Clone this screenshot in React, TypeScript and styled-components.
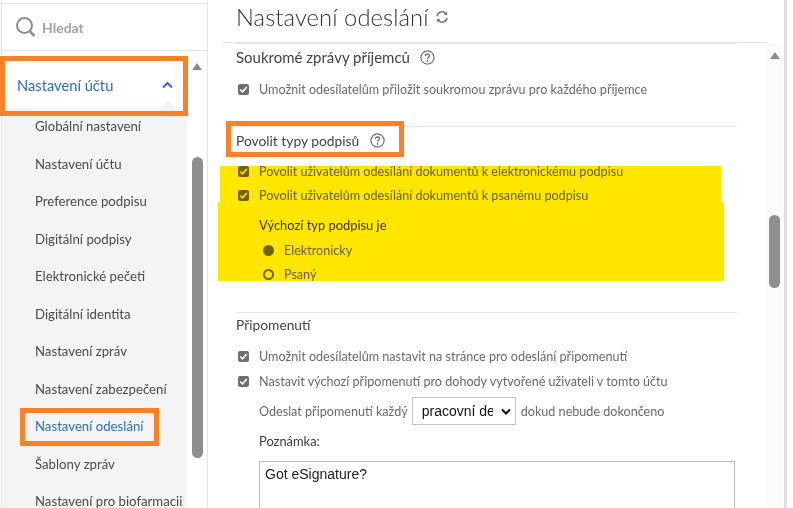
import React from "react";
import styled, { createGlobalStyle } from "styled-components";

const Global = createGlobalStyle`
  html, body { margin: 0; padding: 0; background: #fff; overflow: hidden; }
  body { font-family: Lato, "Open Sans", "Liberation Sans", sans-serif; color: #4b4b4b; }
  #root { width: 793px; height: 508px; }
`;

const Page = styled.div`
  position: relative; width: 793px; height: 508px; overflow: hidden; display: flex; background: #fff;
`;
const Sidebar = styled.aside`
  width: 207px; height: 508px; margin-left: 1px; box-sizing: border-box; flex: none;
  display: flex; flex-direction: column; border-right: 1px solid #e6e6e6; border-left: 1px solid #e6e6e6;
`;
const Search = styled.div`
  height: 48px; margin-top: 3px; flex: none; box-sizing: border-box; display: flex; align-items: center; gap: 6px;
  padding-left: 13px; border-top: 1px solid #e6e6e6; border-bottom: 1px solid #e6e6e6;
  font-size: 14px; font-weight: 700; color: #a3a3a3;
`;
const SideBody = styled.div`
  flex: 1; display: flex; min-height: 0;
`;
const Nav = styled.nav`
  width: 185px; flex: none; display: flex; flex-direction: column;
`;
const NavHead = styled.div`
  position: relative; height: 57px; flex: none; background: #fff; box-sizing: border-box; display: flex; align-items: center;
  justify-content: space-between; padding: 11px 14px 0 15px; font-size: 14.7px; color: #2c6fc0;
  &::after {
    content: ""; position: absolute; right: 11px; bottom: 0; width: 0; height: 0;
    border-left: 8px solid transparent; border-right: 8px solid transparent; border-bottom: 8px solid #f4f4f4;
  }
`;
const NavList = styled.ul`
  list-style: none; margin: 0; padding: 0; flex: 1; background: #f4f4f4; overflow: hidden;
`;
const NavItem = styled.li<{ $active?: boolean }>`
  height: 37.5px; line-height: 37.5px; padding-left: 33px; font-size: 13.2px; white-space: nowrap;
  color: ${(p) => (p.$active ? "#2c6fc0" : "#4b4b4b")};
`;
const Track = styled.div<{ $top: number; $thumbGap: number; $thumb: number; $w: number; $bg?: string }>`
  width: ${(p) => p.$w}px; flex: none; display: flex; flex-direction: column; align-items: center;
  padding-top: ${(p) => p.$top}px; gap: ${(p) => p.$thumbGap}px; background: ${(p) => p.$bg ?? "transparent"};
  &::after { content: ""; width: 11px; height: ${(p) => p.$thumb}px; border-radius: 6px; background: #8e8e8e; }
`;
const Arrow = styled.div`
  width: 0; height: 0; border-left: 5.5px solid transparent; border-right: 5.5px solid transparent;
  border-bottom: 7px solid #8a8a8a;
`;
const Main = styled.main`
  width: 579px; height: 508px; flex: none; display: flex; flex-direction: column; box-sizing: border-box;
  border-right: 3px solid #e0e0e0;
`;
const TitleBar = styled.header`
  height: 43px; flex: none; box-sizing: border-box; margin: 0 17px 0 14px; padding-left: 14px; padding-bottom: 8px;
  display: flex; align-items: center; gap: 6px; border-bottom: 1px solid #e6e6e6;
`;
const Title = styled.h1`
  margin: 0; font-size: 23.7px; font-weight: 300; color: #333; letter-spacing: 0.1px;
`;
const MainBody = styled.div`
  flex: 1; display: flex; min-height: 0;
`;
const Content = styled.div`
  width: 558px; flex: none; box-sizing: border-box; padding-left: 28px; overflow: hidden;
  display: flex; flex-direction: column;
`;
const Section = styled.section<{ $h: number; $line?: boolean }>`
  height: ${(p) => p.$h}px; flex: none; box-sizing: border-box; margin-right: 29px;
  border-top: ${(p) => (p.$line ? "1px solid #e6e6e6" : "1px solid transparent")};
`;
const Heading = styled.h2<{ $size?: number; $h?: number; $gap?: number }>`
  margin: 0; height: ${(p) => p.$h ?? 26}px; display: flex; align-items: center; gap: ${(p) => p.$gap ?? 10}px;
  font-size: ${(p) => p.$size ?? 13.8}px; font-weight: 400; color: #444;
`;
const Row = styled.label<{ $h?: number }>`
  height: ${(p) => p.$h ?? 24}px; display: flex; align-items: center; font-size: 12.6px; color: #6a6a6a; white-space: nowrap;
`;
const Check = styled.span`
  width: 11px; height: 11px; border-radius: 2px; background: #6f6f6f; margin: 0 10px 0 2px; flex: none;
  display: flex; align-items: center; justify-content: center;
`;
const Indented = styled.div`
  padding-left: 23px; display: flex; flex-direction: column;
`;
const SubLabel = styled.div<{ $h: number; $pad?: number }>`
  height: ${(p) => p.$h}px; box-sizing: border-box; padding-top: ${(p) => p.$pad ?? 0}px; display: flex; align-items: center;
  font-size: 12.9px; color: #3c3c3c; white-space: nowrap;
`;
const RadioRow = styled.div`
  height: 24px; display: flex; align-items: center; gap: 10px; padding-left: 4px; font-size: 12.6px; color: #6a6a6a;
`;
const Radio = styled.span<{ $on?: boolean }>`
  width: 11px; height: 11px; box-sizing: border-box; border-radius: 50%; flex: none;
  border: 2px solid #6f6f6f; background: ${(p) => (p.$on ? "#6f6f6f" : "transparent")};
`;
const SelectBox = styled.span`
  width: 104px; height: 28px; box-sizing: border-box; margin: 0 5px 0 4px; border: 1px solid #c4c4c4; flex: none;
  display: flex; align-items: center; justify-content: space-between; padding: 0 4px 0 9px; overflow: hidden;
  font-family: "Liberation Sans", Arial, sans-serif; font-size: 14px; color: #111;
`;
const SelectText = styled.span`
  width: 71px; overflow: hidden; white-space: nowrap;
`;
const TextBox = styled.div`
  width: 476px; height: 70px; box-sizing: border-box; margin-top: 7px; border: 1px solid #bbb; padding: 4px 5px;
  font-family: "Liberation Sans", Arial, sans-serif; font-size: 14px; color: #222; flex: none;
`;
const Frame = styled.div<{ $x: number; $y: number; $w: number; $h: number; $b?: number }>`
  position: absolute; left: ${(p) => p.$x}px; top: ${(p) => p.$y}px; width: ${(p) => p.$w}px; height: ${(p) => p.$h}px;
  box-sizing: border-box; border: ${(p) => p.$b ?? 5}px solid #f98128; pointer-events: none;
`;
const Marker = styled.div<{ $x: number; $y: number; $w: number; $h: number }>`
  position: absolute; left: ${(p) => p.$x}px; top: ${(p) => p.$y}px; width: ${(p) => p.$w}px; height: ${(p) => p.$h}px;
  background: #ffe600; mix-blend-mode: multiply; pointer-events: none;
`;

const Help = () => (
  <svg width="15" height="15" viewBox="0 0 15 15" fill="none">
    <circle cx="7.5" cy="7.5" r="6.6" stroke="#6e6e6e" strokeWidth="1.2" />
    <path d="M5.5 5.9c0-1.2.9-1.9 2-1.9s2 .7 2 1.8c0 1.5-2 1.5-2 3" stroke="#6e6e6e" strokeWidth="1.3" />
    <circle cx="7.5" cy="10.9" r=".9" fill="#6e6e6e" />
  </svg>
);
const Tick = () => (
  <svg width="9" height="9" viewBox="0 0 9 9" fill="none">
    <path d="M1.3 4.700 3.500 6.800 7.800 2" stroke="#fff" strokeWidth="1.6" />
  </svg>
);
const CheckRow = ({ children, h }: { children: React.ReactNode; h?: number }) => (
  <Row $h={h}>
    <Check><Tick /></Check>
    {children}
  </Row>
);

const items = [
  "Globální nastavení", "Nastavení účtu", "Preference podpisu", "Digitální podpisy", "Elektronické pečeti",
  "Digitální identita", "Nastavení zpráv", "Nastavení zabezpečení", "Nastavení odeslání", "Šablony zpráv",
  "Nastavení pro biofarmacii",
];

export default function App() {
  return (
    <Page>
      <Global />
      <Sidebar>
        <Search>
          <svg width="21" height="22" viewBox="0 0 21 22" fill="none">
            <circle cx="9.500" cy="9.500" r="7.500" stroke="#8f8f8f" strokeWidth="2" />
            <path d="m15 15.500 4.500 4.500" stroke="#8f8f8f" strokeWidth="2.600" />
          </svg>
          Hledat
        </Search>
        <SideBody>
          <Nav>
            <NavHead>
              Nastavení účtu
              <svg width="11" height="8" viewBox="0 0 11 8" fill="none">
                <path d="M1 6.500 5.500 2 10 6.500" stroke="#2c6fc0" strokeWidth="2" />
              </svg>
            </NavHead>
            <NavList>
              {items.map((t) => (
                <NavItem key={t} $active={t === "Nastavení odeslání"}>{t}</NavItem>
              ))}
            </NavList>
          </Nav>
          <Track $w={20} $top={12} $thumbGap={87} $thumb={301}><Arrow /></Track>
        </SideBody>
      </Sidebar>
      <Main>
        <TitleBar>
          <Title>Nastavení odeslání</Title>
          <svg width="14" height="14" viewBox="0 0 14 14" fill="none">
            <path d="M2 6a5 5 0 0 1 9-2M12 8a5 5 0 0 1-9 2" stroke="#7a7a7a" strokeWidth="1.500" />
            <path d="M12 1.500V5H8.700zM2 12.500V9h3.300z" fill="#7a7a7a" />
          </svg>
        </TitleBar>
        <MainBody>
          <Content>
            <Section $h={83} $line>
              <Heading $size={15}>Soukromé zprávy příjemců <Help /></Heading>
              <Row $h={38}><Check><Tick /></Check>Umožnit odesílatelům přiložit soukromou zprávu pro každého příjemce</Row>
            </Section>
            <Section $h={186} $line>
              <Heading $gap={11}>Povolit typy podpisů <Help /></Heading>
              <Row $h={6} />
              <CheckRow>Povolit uživatelům odesílání dokumentů k elektronickému podpisu</CheckRow>
              <CheckRow>Povolit uživatelům odesílání dokumentů k psanému podpisu</CheckRow>
              <Indented>
                <SubLabel $h={31} $pad={5}>Výchozí typ podpisu je</SubLabel>
                <RadioRow><Radio $on />Elektronicky</RadioRow>
                <RadioRow><Radio />Psaný</RadioRow>
              </Indented>
            </Section>
            <Section $h={200} $line>
              <Heading $h={22}>Připomenutí</Heading>
              <Row $h={9} />
              <CheckRow>Umožnit odesílatelům nastavit na stránce pro odeslání připomenutí</CheckRow>
              <CheckRow h={26}>Nastavit výchozí připomenutí pro dohody vytvořené uživateli v tomto účtu</CheckRow>
              <Indented>
                <Row $h={34}>
                  Odeslat připomenutí každý
                  <SelectBox>
                    <SelectText>pracovní den</SelectText>
                    <svg width="10" height="7" viewBox="0 0 10 7" fill="none">
                      <path d="M1 1.500 5 5.500 9 1.500" stroke="#111" strokeWidth="2" />
                    </svg>
                  </SelectBox>
                  dokud nebude dokončeno
                </Row>
                <SubLabel $h={26}>Poznámka:</SubLabel>
                <TextBox>Got eSignature?</TextBox>
              </Indented>
            </Section>
          </Content>
          <Track $w={17} $top={9} $thumbGap={156} $thumb={73} $bg="#fbfbfb"><Arrow /></Track>
        </MainBody>
      </Main>
      <Marker $x={220} $y={166} $w={501} $h={36} />
      <Marker $x={218} $y={202} $w={506} $h={79} />
      <Frame $x={0} $y={56} $w={188} $h={60} />
      <Frame $x={226} $y={121} $w={178} $h={36} />
      <Frame $x={20} $y={408} $w={139} $h={38} />
    </Page>
  );
}
